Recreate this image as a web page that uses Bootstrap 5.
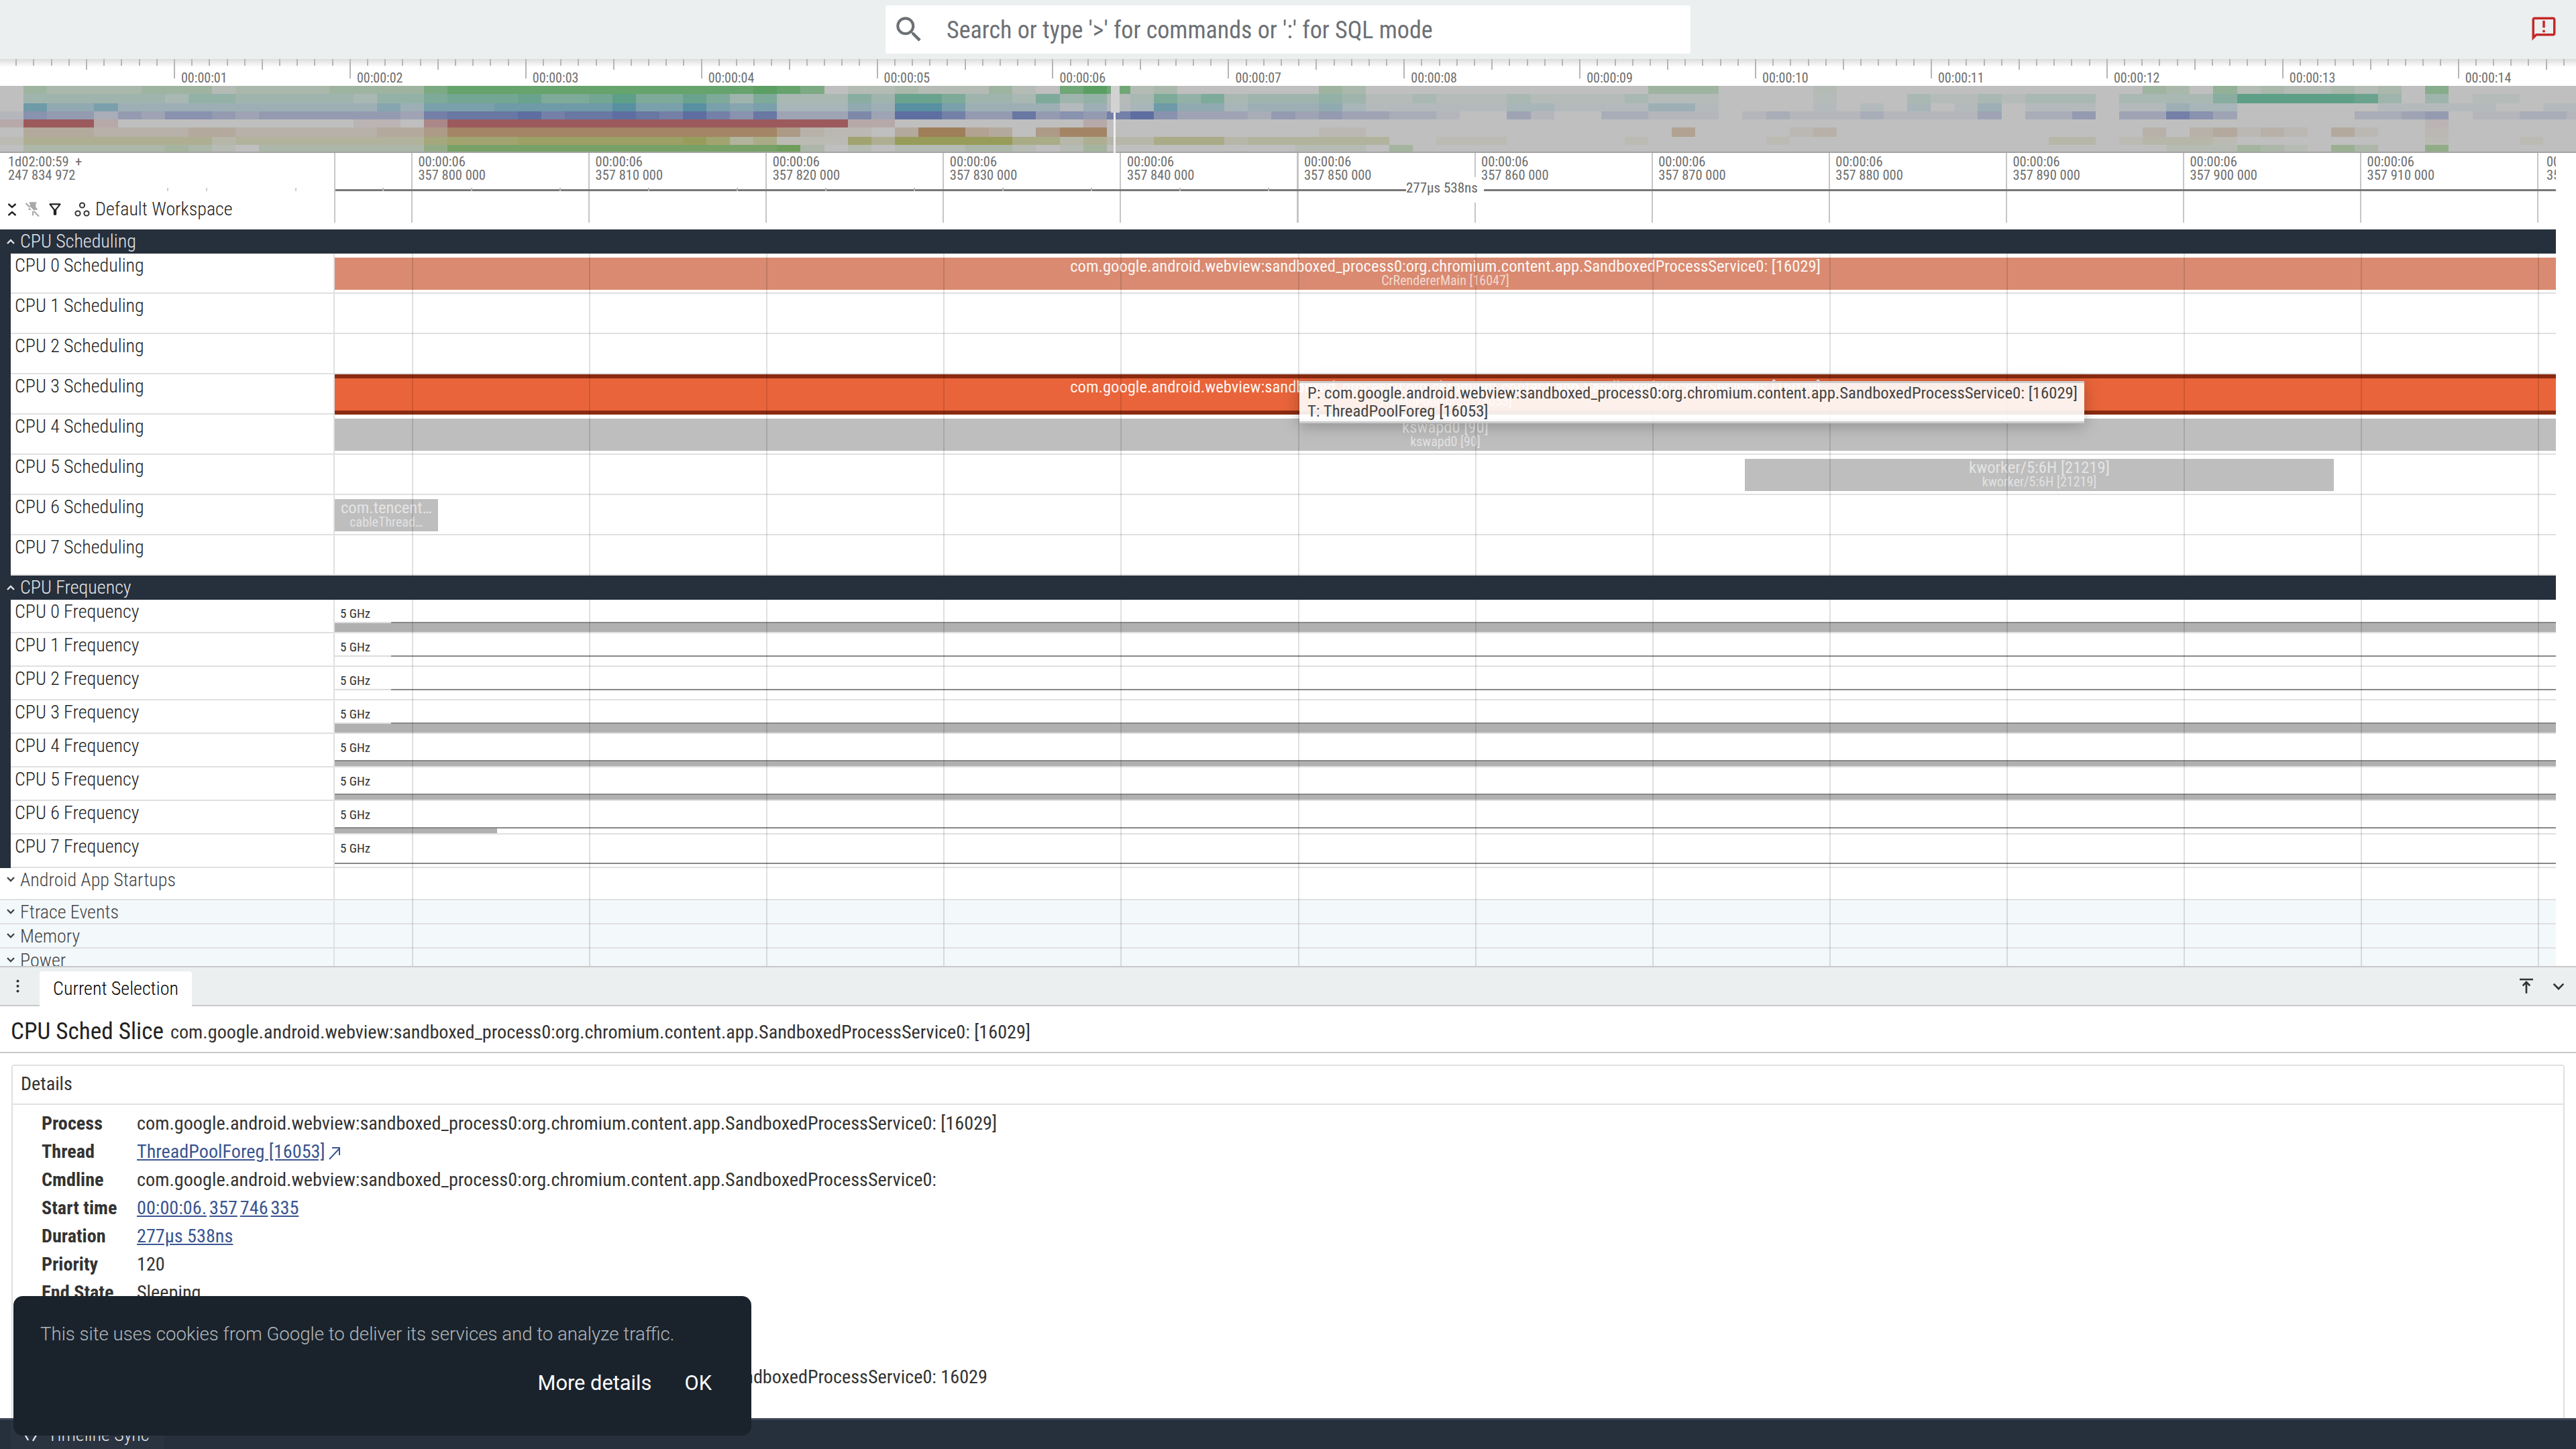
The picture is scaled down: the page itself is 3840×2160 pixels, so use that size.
<!DOCTYPE html>
<html lang="en">

<head>
  <meta charset="UTF-8" />
  <title>Perfetto UI</title>
  <link href="https://cdn.jsdelivr.net/npm/bootstrap@5.3.0/dist/css/bootstrap.min.css" rel="stylesheet" />
  <style>
    body { margin: 0; background: #fff; font-family: Roboto, "Liberation Sans", sans-serif; color: #222; }
    .app-shell { width: 3840px; height: 2160px; position: relative; overflow: hidden; }
    .cond { font-family: "Roboto Condensed", "Liberation Sans Narrow", Roboto, sans-serif; font-stretch: 75%; }

    .top-strip { height: 88px; background: #ebeff0; }
    .search-box { width: 1200px; height: 72px; background: #fff; border-radius: 4px; padding-left: 10px; color: #6c7075; font-size: 36px; }
    .search-box svg { width: 50px; height: 50px; fill: #6c7075; margin-right: 31px; }
    .search-box span { padding-top: 2px; }
    .report-icon { width: 42px; height: 42px; fill: #c62828; position: absolute; right: 27px; top: 22px; }

    .overview-ruler { height: 40px; position: relative; background: linear-gradient(#dcdcdc, #fff 12px); }
    .overview-ruler span { position: absolute; top: 16px; font-size: 20px; color: #6e6e6e; line-height: 24px; }
    .overview-ruler i { position: absolute; top: 0; width: 2px; background: #b6b6b6; }
    .heat-map { display: block; width: 3840px; height: 100px; }

    .time-head { height: 114px; position: relative; width: 3810px; }
    .time-left { width: 498px; font-size: 20.5px; line-height: 20px; color: #6e6e6e; padding: 3px 0 0 12px; position: relative; }
    .left-tick { position: absolute; top: 52px; width: 2px; height: 5px; background: #ccc; }
    .time-lane { flex: 1; position: relative; border-left: 2px solid #c6c6c6; height: 104px; }
    .time-lane::after { content: ""; position: absolute; left: 113px; right: 0; top: 0; bottom: 0; background: repeating-linear-gradient(90deg, #c6c6c6 0 2px, transparent 2px 264.1px); }
    .time-stamp { position: absolute; top: 3px; font-size: 20.5px; line-height: 20px; color: #6e6e6e; white-space: nowrap; z-index: 2; }
    .ruler-line { position: absolute; top: 54px; left: 0; right: 0; height: 3px; background: #777; z-index: 1; }
    .ruler-tick { position: absolute; top: 52px; height: 5px; width: 2px; background: #bbb; z-index: 1; }
    .ruler-label { position: absolute; top: 36px; left: 1596px; width: 116px; background: #fff; color: #666; font-size: 21px; line-height: 32px; text-align: left; z-index: 2; height: 38px; }
    .workspace-row { position: absolute; left: 5px; top: 63px; font-size: 28px; font-weight: 300; color: #222; }
    .workspace-row svg { width: 26px; height: 26px; flex: none; }
    .ws-fold { fill: none; stroke: #222; stroke-width: 2.4; margin-right: 5px; }
    .ws-pin { fill: #a8a8a8; margin-right: 7px; }
    .ws-filter { fill: #222; margin-right: 14px; }
    .ws-orbit { fill: none; stroke: #333; stroke-width: 2; margin-right: 7px; }

    .tracks-area { height: 1098px; width: 3810px; overflow: hidden; font-weight: 300; }
    .group-bar { height: 36px; background: #262f3c; color: #e4e6e9; font-size: 28px; line-height: 36px; padding-left: 30px; position: relative; }
    .chevron-mark { position: absolute; left: 9px; top: 13px; width: 14px; height: 10px; fill: none; stroke-width: 2.4; }
    .group-body { border-left: 16px solid #262f3c; }
    .track-row { display: flex; border-bottom: 2px solid #e0e0e0; }
    .track-name { width: 483px; padding: 2px 0 0 6px; font-size: 28px; line-height: 32px; color: #222; border-right: 2px solid #e0e0e0; flex: none; }
    .track-lane { flex: 1; position: relative; }
    .track-lane::after { content: ""; position: absolute; left: 115px; right: 0; top: 0; bottom: -2px; background: repeating-linear-gradient(90deg, rgba(0,0,0,.12) 0 2px, transparent 2px 264.1px); pointer-events: none; z-index: 3; }
    .sched-row { height: 60px; }
    .freq-row { height: 50px; }
    .slice-bar { position: absolute; top: 6px; height: 48px; color: rgba(255,255,255,.95); font-size: 24.6px; font-weight: 400; line-height: 22px; text-align: center; padding-top: 2px; white-space: nowrap; overflow: hidden; }
    .slice-bar small { display: block; font-size: 20px; line-height: 21px; opacity: .72; }
    .slice-run { background: #da8a70; }
    .slice-hot { background: #e9643a; top: 0; height: 60px; border-top: 6px solid #8a2a10; border-bottom: 6px solid #8a2a10; }
    .slice-idle { background: #bebebe; color: rgba(255,255,255,.6); }
    .slice-idle small { opacity: .95; }
    .freq-label { position: absolute; left: 8px; top: 11px; font-size: 19px; font-weight: 400; line-height: 20px; color: #333; z-index: 2; }
    .freq-line { position: absolute; left: 0; right: 0; height: 2px; background: #888; }
    .freq-fade { position: absolute; left: 0; height: 2px; background: #ddd; }
    .freq-fill { position: absolute; left: 0; background: #b0b0b0; }
    .plain-group { background: #fff; height: 48px; }
    .tint-group { background: #f3f8fb; height: 36px; }
    .fold-name { width: 499px; padding: 2px 0 0 30px; font-size: 28px; line-height: 32px; color: #444; border-right: 2px solid #e0e0e0; flex: none; position: relative; }
    .fold-name svg { stroke: #444; top: 12px; }

    .tab-strip { height: 60px; background: #ebeff0; border-top: 2px solid #c8c8c8; border-bottom: 2px solid #c8c8c8; position: relative; }
    .tab-dots { width: 59px; padding-right: 6px; }
    .tab-dots svg { width: 5px; height: 20px; fill: #333; }
    .tab-strip .nav-tabs { border: 0; margin-top: 6px; }
    .tab-strip .nav-link { background: #fff; border: 0; border-radius: 4px 4px 0 0; height: 52px; width: 227px; padding: 0; text-align: center; line-height: 52px; color: #333; font-size: 28px; font-weight: 300; }
    .tab-tools { position: absolute; right: 10px; top: 12px; gap: 16px; }
    .tab-tools svg { width: 32px; height: 32px; fill: none; stroke: #333; stroke-width: 2; }

    .detail-head { height: 70px; border-bottom: 2px solid #c8c8c8; padding: 6px 0 0 16px; align-items: center; }
    .detail-head h1 { font-size: 35.2px; font-weight: 400; margin: 0 10px 0 0; color: #222; }
    .detail-head span { font-size: 28.2px; color: #333; padding-top: 5px; }
    .detail-card { margin: 17px 17px 0 17px; border: 2px solid #e0e0e0; border-radius: 4px; height: 600px; font-size: 28.2px; }
    .detail-card .card-header { background: #fff; border-bottom: 2px solid #e0e0e0; height: 58px; line-height: 54px; padding: 0 12px; color: #333; border-radius: 0; }
    .info-list { padding: 7px 0 0 43px; }
    .info-row { height: 42px; line-height: 42px; white-space: nowrap; color: #333; }
    .info-row b { width: 142px; display: inline-block; font-weight: 700; }
    .info-row a { color: #3b5590; text-decoration: none; }
    .info-row a span { text-decoration: underline; margin-right: 4px; }
    .out-mark { width: 22px; height: 22px; fill: none; stroke: #3b5590; stroke-width: 2; margin-left: 2px; }

    .status-strip { position: absolute; left: 0; right: 0; bottom: 0; height: 46px; background: #262f3c; border-top: 3px solid #3c4655; color: #e4e6e9; font-size: 28px; font-weight: 300; }
    .status-tile { background: #2a3340; height: 100%; margin-left: 16px; width: 228px; }
    .status-strip svg { width: 26px; height: 26px; fill: none; stroke: #e4e6e9; stroke-width: 2.4; margin: 0 11px 0 18px; }

    .hover-tip { position: absolute; left: 1937px; top: 568px; width: 1170px; height: 63px; background: rgba(255,255,255,.9); border-top: 3px solid #ccc; border-bottom: 3px solid #ccc; box-shadow: 0 4px 24px rgba(0,0,0,.25); padding: 1px 12px; font-size: 24.7px; line-height: 27px; color: #444; white-space: nowrap; z-index: 10; }
    .cookie-note { position: absolute; left: 20px; top: 1932px; width: 1100px; height: 208px; background: #1a232c; border-radius: 14px; z-index: 11; padding: 40px 59px 0 40px; }
    .cookie-note p { color: #b4b8bc; font-size: 27.6px; font-weight: 300; margin: 0 0 33px 0; line-height: 34px; }
    .cookie-note .btn { color: #fff; font-size: 30.8px; font-weight: 400; padding: 0; border: 0; }
  </style>
</head>

<body>
  <div class="app-shell">

    <div class="top-strip d-flex justify-content-center align-items-center">
      <div class="search-box d-flex align-items-center cond">
        <svg viewBox="0 0 24 24"><path d="M15.5 14h-.79l-.28-.27A6.471 6.471 0 0 0 16 9.5 6.5 6.5 0 1 0 9.5 16c1.61 0 3.09-.59 4.23-1.57l.27.28v.79l5 4.99L20.49 19l-4.99-5zm-6 0C7.01 14 5 11.99 5 9.5S7.01 5 9.5 5 14 7.01 14 9.5 11.99 14 9.5 14z"/></svg>
        <span>Search or type '&gt;' for commands or ':' for SQL mode</span>
      </div>
      <svg class="report-icon" viewBox="0 0 24 24"><path d="M20 2H4c-1.1 0-1.99.9-1.99 2L2 22l4-4h14c1.1 0 2-.9 2-2V4c0-1.1-.9-2-2-2zm0 14H5.17L4 17.17V4h16v12zM11 5h2v6h-2zm0 8h2v2h-2z"/></svg>
    </div>

    <div class="overview-ruler cond" id="overviewRuler"></div>
    <svg class="heat-map" id="heatMap" viewBox="0 0 3840 100" shape-rendering="crispEdges"></svg>

    <div class="time-head d-flex cond">
      <div class="time-left">1d02:00:59&nbsp; +<br />247 834 972
        <i class="left-tick" style="left:249px"></i><i class="left-tick" style="left:307px"></i><i class="left-tick" style="left:440px"></i>
      </div>
      <div class="time-lane" id="timeLane">
        <div class="ruler-line"></div>
        <div class="ruler-label">277µs 538ns</div>
      </div>
      <div class="workspace-row d-flex align-items-center">
        <svg class="ws-fold" viewBox="0 0 26 26"><path d="M7.5 5l5.5 5 5.5-5M7.5 22l5.5-5 5.5 5"/></svg>
        <svg class="ws-pin" viewBox="0 0 24 24"><path d="M16 9V4h1V2H7v2h1v5l-2 2v2h5v7l1 1 1-1v-7h5v-2zM3 3l18 18-1.4 1.4L1.6 4.4z"/></svg>
        <svg class="ws-filter" viewBox="0 0 24 24"><path d="M7 6h10l-5.01 6.3L7 6zm-2.75-.39C6.27 8.2 10 13 10 13v6c0 .55.45 1 1 1h2c.55 0 1-.45 1-1v-6s3.72-4.8 5.74-7.39A.998.998 0 0 0 18.95 4H5.04c-.83 0-1.3.95-.79 1.61z"/></svg>
        <svg class="ws-orbit" viewBox="0 0 26 26"><circle cx="13.5" cy="7" r="3.6"/><circle cx="7" cy="19" r="3.6"/><circle cx="20" cy="19" r="3.6"/></svg>
        <span>Default Workspace</span>
      </div>
    </div>

    <div class="tracks-area cond" id="tracksArea"></div>

    <div class="tab-strip d-flex cond">
      <div class="tab-dots d-flex align-items-center justify-content-center">
        <svg viewBox="0 0 4 16"><circle cx="2" cy="2" r="1.6"/><circle cx="2" cy="8" r="1.6"/><circle cx="2" cy="14" r="1.6"/></svg>
      </div>
      <ul class="nav nav-tabs"><li class="nav-item"><a class="nav-link active" href="#">Current Selection</a></li></ul>
      <div class="tab-tools d-flex align-items-center">
        <svg viewBox="0 0 24 24"><path d="M4.5 4.5h15M12 20V8M8 11.5l4-4 4 4"/></svg>
        <svg viewBox="0 0 24 24"><path d="M6.5 9.5 12 15l5.5-5.5"/></svg>
      </div>
    </div>

    <div class="detail-head d-flex cond">
      <h1>CPU Sched Slice</h1>
      <span>com.google.android.webview:sandboxed_process0:org.chromium.content.app.SandboxedProcessService0: [16029]</span>
    </div>

    <div class="card detail-card cond">
      <div class="card-header">Details</div>
      <div class="info-list" id="infoList"></div>
    </div>

    <div class="status-strip d-flex align-items-center cond">
      <div class="status-tile d-flex align-items-center">
        <svg viewBox="0 0 26 26"><path d="M3 12l5 9M22 10l-7 12"/></svg>
        Timeline Sync
      </div>
    </div>

    <div class="hover-tip cond">P: com.google.android.webview:sandboxed_process0:org.chromium.content.app.SandboxedProcessService0: [16029]<br />T: ThreadPoolForeg [16053]</div>

    <div class="cookie-note">
      <p>This site uses cookies from Google to deliver its services and to analyze traffic.</p>
      <div class="d-flex justify-content-end" style="gap:49px">
        <a class="btn" href="#">More details</a>
        <a class="btn" href="#">OK</a>
      </div>
    </div>
  </div>

  <script>
    // overview ruler ticks
    const ruler = document.getElementById("overviewRuler");
    let rulerHtml = "";
    for (let i = 0; i < 146; i++) {
      const x = 23.2 + i * 26.19;
      const n = (i - 9 + 1000) % 10;
      const h = n === 0 ? 29 : n === 5 ? 16 : 10;
      rulerHtml += `<i style="left:${x.toFixed(1)}px;height:${h}px"></i>`;
    }
    for (let s = 1; s <= 14; s++) {
      const x = 259 + (s - 1) * 261.9 + 11;
      rulerHtml += `<span style="left:${x.toFixed(1)}px">00:00:${String(s).padStart(2, "0")}</span>`;
    }
    ruler.innerHTML = rulerHtml;

    // overview heat map, one digit per 35px column
    const heatRows = [
      ["#5b9f63", "0322223331 2222333368 8888888888 8898601121 1131079712 0000003200 0000000000 3330000100 0000000000 0320412112 1205000000"],
      ["#5e9f88", "0333333244 3333324467 7786679668 6362225388 6332634126 4623334311 2111211112 1110000100 0211212220 2222599999 8303011000"],
      ["#5890a2", "0744633333 3333335366 6777779669 6562224399 6333313127 4423334211 1111221111 3310000101 0201301110 1132200000 0111110011"],
      ["#5e6ea0", "1544243554 3444444378 8897889879 7583336399 7448454795 3332434332 2100310022 1110121112 1111302240 3375300000 2234011221"],
      ["#9c5a5c", "2999200000 0000011059 9999999999 9999992200 0000002000 0000000000 0000000000 0000000000 0000000000 0000000000 0001000000"],
      ["#9f7e5a", "0333222233 2222223358 8888888888 8885211039 9430588000 0000001100 0000000000 0400001200 0000000000 0202312103 1001000000"],
      ["#989c5a", "1444444442 3333333367 7788888889 7351117499 9995524225 5523333330 0111000001 0000010000 0000000220 1222100000 0001000100"],
      ["#6f9d5c", "0222222321 0222222258 8888888888 8889201011 1221013000 0000011103 0000000000 0000000000 0000000000 0011132104 2005000000"]
    ];
    const rowEdges = [0, 12, 26, 38, 50, 62, 76, 88, 100];
    const mix = (hex, t) => {
      const c = [1, 3, 5].map((i) => parseInt(hex.substr(i, 2), 16));
      return `rgb(${c.map((v) => Math.round(191 + (v - 191) * t)).join(",")})`;
    };
    let heatSvg = "";
    heatRows.forEach(([hex, groups], r) => {
      const digits = groups.replace(/ /g, "");
      for (let c = 0; c < 110; c++) {
        const d = Number(digits[c] || 0);
        heatSvg += `<rect x="${(c * 35.1).toFixed(1)}" y="${rowEdges[r]}" width="35.6" height="${rowEdges[r + 1] - rowEdges[r]}" fill="${mix(hex, d / 9)}"/>`;
      }
    });
    heatSvg += `<rect x="0" y="98" width="3840" height="2" fill="#a4a4a4"/>`;
    heatSvg += `<rect x="1656" y="0" width="13" height="40" fill="#d2d2d2"/><rect x="1660" y="40" width="3" height="60" fill="#eee"/>`;
    document.getElementById("heatMap").innerHTML = heatSvg;

    // time stamps above the tracks
    const lane = document.getElementById("timeLane");
    let laneHtml = "";
    for (let i = 0; i < 12; i++) {
      const x = 113 + i * 264.1 + 10.5;
      laneHtml += `<div class="time-stamp" style="left:${x.toFixed(1)}px">00:00:06<br />357 ${800 + i * 10} 000</div>`;
    }
    laneHtml += `<div class="time-stamp" style="left:3296px;width:14px;overflow:hidden">00<br />35</div>`;
    for (let i = 0; i < 11; i++) {
      laneHtml += `<div class="ruler-tick" style="left:${(70 + i * 132).toFixed(0)}px"></div>`;
    }
    lane.insertAdjacentHTML("beforeend", laneHtml);

    // tracks
    const up = '<svg class="chevron-mark" viewBox="0 0 14 10" stroke="#e4e6e9"><path d="M2 8l5-5 5 5"/></svg>';
    const down = '<svg class="chevron-mark" viewBox="0 0 14 10"><path d="M2 2l5 5 5-5"/></svg>';
    const PROC = "com.google.android.webview:sandboxed_process0:org.chromium.content.app.SandboxedProcessService0: [16029]";
    const schedSlices = {
      0: `<div class="slice-bar slice-run" style="left:0;right:0">${PROC}<small>CrRendererMain [16047]</small></div>`,
      3: `<div class="slice-bar slice-hot" style="left:0;right:0">${PROC}<small>ThreadPoolForeg [16053]</small></div>`,
      4: `<div class="slice-bar slice-idle" style="left:0;right:0">kswapd0 [90]<small>kswapd0 [90]</small></div>`,
      5: `<div class="slice-bar slice-idle" style="left:2102px;width:878px">kworker/5:6H [21219]<small>kworker/5:6H [21219]</small></div>`,
      6: `<div class="slice-bar slice-idle" style="left:0;width:154px">com.tencent…<small>cableThread…</small></div>`
    };
    // line offset, faded start, fill width (px, or 0 = none, -1 = to the end)
    const freqRows = [[33, 84, -1], [33, 84, 0], [33, 84, 0], [33, 84, -1], [39, 0, -1], [39, 0, -1], [39, 0, 242], [42, 0, 0]];

    let html = `<div class="group-bar">${up}CPU Scheduling</div><div class="group-body">`;
    for (let i = 0; i < 8; i++) {
      html += `<div class="track-row sched-row"><div class="track-name">CPU ${i} Scheduling</div><div class="track-lane">${schedSlices[i] || ""}</div></div>`;
    }
    html += `</div><div class="group-bar">${up}CPU Frequency</div><div class="group-body">`;
    freqRows.forEach(([y, fade, fill], i) => {
      const fillCss = fill === 0 ? "" : `<div class="freq-fill" style="top:${y + 2}px;bottom:0;${fill > 0 ? `width:${fill}px` : "right:0"}"></div>`;
      const fadeCss = fade ? `<div class="freq-fade" style="top:${y}px;width:${fade}px"></div>` : "";
      html += `<div class="track-row freq-row"><div class="track-name">CPU ${i} Frequency</div><div class="track-lane"><span class="freq-label">5 GHz</span>${fillCss}<div class="freq-line" style="top:${y}px;left:${fade}px"></div>${fadeCss}</div></div>`;
    });
    html += `</div>`;
    [["Android App Startups", "plain-group"], ["Ftrace Events", "tint-group"], ["Memory", "tint-group"], ["Power", "tint-group"]].forEach(([name, cls]) => {
      html += `<div class="track-row ${cls}"><div class="fold-name">${down}${name}</div><div class="track-lane"></div></div>`;
    });
    document.getElementById("tracksArea").innerHTML = html;

    // details list
    const info = [
      ["Process", PROC],
      ["Thread", '<a href="#"><span class="me-0">ThreadPoolForeg [16053]</span></a><svg class="out-mark" viewBox="0 0 22 22"><path d="M4 20 19 4M8 3h11v11"/></svg>'],
      ["Cmdline", "com.google.android.webview:sandboxed_process0:org.chromium.content.app.SandboxedProcessService0:"],
      ["Start time", '<a href="#"><span>00:00:06.</span><span>357</span><span>746</span><span>335</span></a>'],
      ["Duration", '<a href="#"><span>277µs 538ns</span></a>'],
      ["Priority", "120"],
      ["End State", "Sleeping"],
      ["SQL ID", "sched[1]"],
      ["Ucpu", "3"],
      ["Name", PROC.replace("[16029]", "16029")]
    ];
    document.getElementById("infoList").innerHTML = info
      .map(([k, v]) => `<div class="info-row"><b>${k}</b>${v}</div>`)
      .join("");
  </script>
  <script src="https://cdn.jsdelivr.net/npm/bootstrap@5.3.0/dist/js/bootstrap.bundle.min.js"></script>
</body>

</html>
